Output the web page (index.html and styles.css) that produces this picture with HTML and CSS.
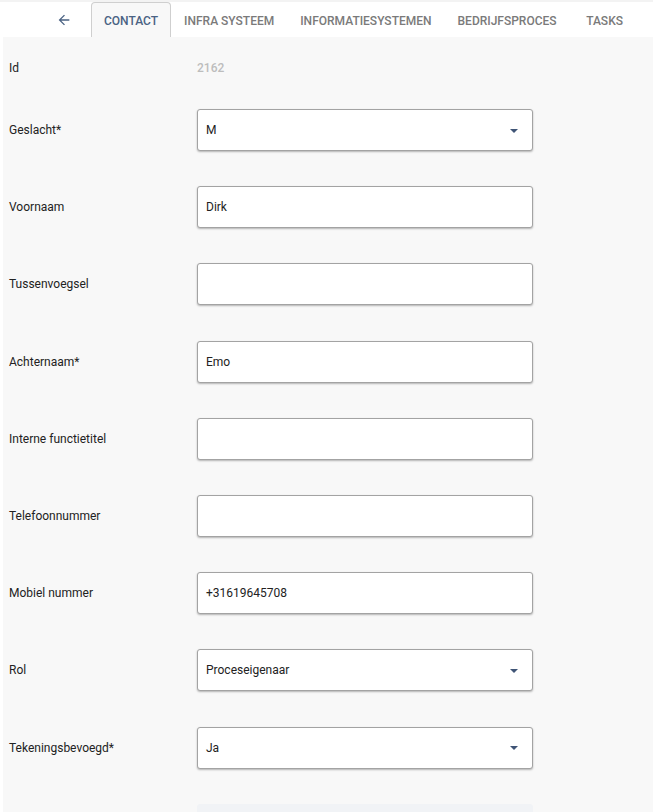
FILE: index.html
```html
<!DOCTYPE html>
<html lang="nl">
<head>
<meta charset="utf-8">
<title>Contact</title>
<link rel="stylesheet" href="styles.css">
</head>
<body>
<div class="topstrip"></div>
<nav class="tabbar">
  <button class="back" aria-label="Terug">
    <svg width="16" height="16" viewBox="0 0 24 24"><path d="M20 11H7.83l5.59-5.59L12 4l-8 8 8 8 1.41-1.41L7.83 13H20v-2z" fill="#4a6283"/></svg>
  </button>
  <div class="tab active">CONTACT</div>
  <div class="tab">INFRA SYSTEEM</div>
  <div class="tab">INFORMATIESYSTEMEN</div>
  <div class="tab">BEDRIJFSPROCES</div>
  <div class="tab">TASKS</div>
</nav>
<main class="content">
  <div class="row id-row">
    <div class="label">Id</div>
    <div class="idval">2162</div>
  </div>
  <div class="row">
    <div class="label">Geslacht*</div>
    <div class="field select"><span>M</span><i class="caret"></i></div>
  </div>
  <div class="row">
    <div class="label">Voornaam</div>
    <div class="field"><span>Dirk</span></div>
  </div>
  <div class="row">
    <div class="label">Tussenvoegsel</div>
    <div class="field"></div>
  </div>
  <div class="row">
    <div class="label">Achternaam*</div>
    <div class="field"><span>Emo</span></div>
  </div>
  <div class="row">
    <div class="label">Interne functietitel</div>
    <div class="field"></div>
  </div>
  <div class="row">
    <div class="label">Telefoonnummer</div>
    <div class="field"></div>
  </div>
  <div class="row">
    <div class="label">Mobiel nummer</div>
    <div class="field"><span>+31619645708</span></div>
  </div>
  <div class="row">
    <div class="label">Rol</div>
    <div class="field select"><span>Proceseigenaar</span><i class="caret"></i></div>
  </div>
  <div class="row">
    <div class="label">Tekeningsbevoegd*</div>
    <div class="field select"><span>Ja</span><i class="caret"></i></div>
  </div>
  <div class="row">
    <div class="label"></div>
    <div class="field disabled"></div>
  </div>
</main>
</body>
</html>
```

FILE: styles.css
```css
* { box-sizing: border-box; }
html, body { margin: 0; padding: 0; }
body {
  background: #ffffff;
  font-family: Roboto, "Liberation Sans", sans-serif;
  color: #222;
  overflow: hidden;
  height: 812px;
}
.topstrip { height: 2px; background: #f3f3f3; }
.tabbar {
  display: flex;
  align-items: stretch;
  height: 35px;
  background: #fff;
  padding-left: 44px;
}
.back {
  width: 40px;
  padding: 0;
  margin-right: 7px;
  border: 0;
  background: transparent;
  display: flex;
  align-items: center;
  justify-content: center;
}
.tab {
  display: flex;
  align-items: center;
  justify-content: center;
  padding: 1px 12px 0;
  font-size: 12px;
  font-weight: 500;
  letter-spacing: 0;
  color: #7a7a7a;
  border: 1px solid transparent;
  border-bottom: 0;
}
.tab:last-child { min-width: 70px; }
.tab.active {
  color: #4a6283;
  background: #f8f8f8;
  border-color: #cfcfcf;
  border-radius: 4px 4px 0 0;
}
.content {
  margin-left: 3px;
  background: #f8f8f8;
  padding: 21px 0 0 6px;
  height: 775px;
}
.row {
  display: flex;
  align-items: center;
  height: 42px;
  margin-bottom: 35.2px;
}
.id-row {
  height: 20px;
  margin-bottom: 31px;
}
.label {
  width: 188px;
  font-size: 12px;
  color: #222;
}
.idval {
  font-size: 12px;
  font-weight: 500;
  color: #bdbdbd;
}
.field {
  width: 336px;
  height: 42px;
  background: #fff;
  border: 1px solid #a3a3a3;
  border-radius: 3px;
  box-shadow: 0 1px 2px rgba(0, 0, 0, 0.28);
  display: flex;
  align-items: center;
  padding: 0 14px 0 8px;
  font-size: 12px;
  color: #222;
}
.field span { flex: 1; }
.caret {
  width: 0;
  height: 0;
  border-left: 4px solid transparent;
  border-right: 4px solid transparent;
  border-top: 4px solid #3f5476;
  margin-top: 1px;
}
.field.disabled {
  background: #f1f3f6;
  border-color: #f1f3f6;
  box-shadow: none;
}
```
